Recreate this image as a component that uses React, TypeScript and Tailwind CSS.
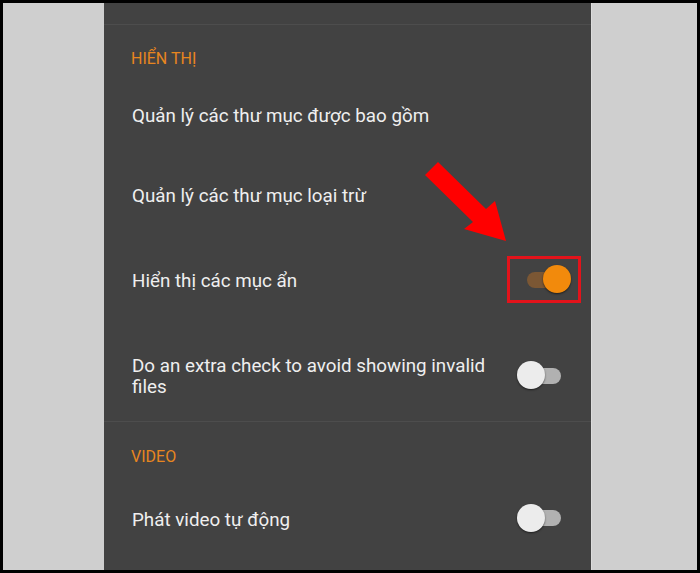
type SwitchProps = {
  on?: boolean
}

// Android-style switch: 34x16 track, 28px thumb overhanging both ends
function Switch({ on = false }: SwitchProps) {
  return (
    <div className="relative flex h-[29px] w-[54px] items-center justify-center">
      <div
        className={`h-[16px] w-[34px] rounded-full ${on ? 'bg-[#7b5734]' : 'bg-[#b1b1b1]'}`}
      />
      <div
        className={`absolute top-0 h-[28px] w-[28px] rounded-full shadow-[0_1px_2px_rgba(0,0,0,0.55)] ${
          on ? 'right-0 bg-[#f28a0c]' : 'left-0 bg-[#ececec]'
        }`}
      />
    </div>
  )
}

function SectionTitle({ children }: { children: string }) {
  return <div className="text-[16px] leading-[20px] text-[#e8861f]">{children}</div>
}

export default function App() {
  return (
    <div className="relative h-[573px] w-[700px] overflow-hidden font-['Roboto','Noto_Sans',sans-serif]">
      <div className="flex h-full w-full border-[3px] border-black bg-[#cfcfcf]">
        <div className="w-[101px] shrink-0" />

        {/* Settings panel */}
        <div className="flex w-[487px] shrink-0 flex-col bg-[#424242] text-[#efefef]">
          <div className="h-[22px] border-b border-[#4d4d4d]" />

          <div className="pl-[27px] pt-[24px]">
            <SectionTitle>HIỂN THỊ</SectionTitle>
          </div>

          <div className="flex h-[93px] items-center pl-[28px] text-[18.8px] leading-[24px]">
            Quản lý các thư mục được bao gồm
          </div>

          <div className="flex h-[67px] items-center pl-[28px] text-[18.8px] leading-[24px]">
            Quản lý các thư mục loại trừ
          </div>

          <div className="flex h-[101px] items-center justify-between pl-[28px] pr-[20px] text-[18.8px] leading-[24px]">
            <span className="pt-[3px]">Hiển thị các mục ẩn</span>
            <div className="-mx-[10px] -my-[9px] border-[3px] border-[#e3131b] px-[7px] py-[6px]">
              <Switch on />
            </div>
          </div>

          <div className="flex h-[91px] items-center justify-between pl-[28px] pr-[20px] text-[18.8px] leading-[21px]">
            <span className="w-[370px] pt-[3px]">Do an extra check to avoid showing invalid files</span>
            <Switch />
          </div>

          <div className="border-t border-[#4d4d4d] pl-[27px] pt-[25px]">
            <SectionTitle>VIDEO</SectionTitle>
          </div>

          <div className="flex h-[102px] items-center justify-between pl-[28px] pr-[20px] text-[18.8px] leading-[24px]">
            <span className="pt-[3px]">Phát video tự động</span>
            <Switch />
          </div>
        </div>

        <div className="flex-1 border-l border-[#dcdcdc]" />
      </div>

      {/* Annotation arrow pointing at the toggle */}
      <svg
        className="pointer-events-none absolute left-0 top-0"
        width="700"
        height="573"
        viewBox="0 0 700 573"
      >
        <polygon
          points="438,162 486,209 495,201 506,241 464,229 473,222 425,175"
          fill="#ff0000"
        />
      </svg>
    </div>
  )
}
